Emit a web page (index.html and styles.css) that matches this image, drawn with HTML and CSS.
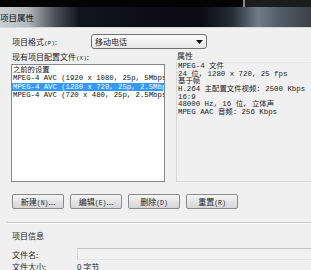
FILE: index.html
```html
<!DOCTYPE html>
<html lang="zh-CN">
<head>
    <meta charset="UTF-8">
    <meta name="viewport" content="width=device-width, initial-scale=1.0">
    <title>项目属性</title>
    <link rel="stylesheet" href="styles.css">
</head>
<body>
<div class="window">
    <!-- Franja superior (otra ventana detrás) -->
    <div class="top-strip">
        <div class="strip-dark"></div>
        <div class="strip-line"></div>
        <div class="strip-gray"></div>
    </div>

    <div class="titlebar">项目属性</div>

    <div class="dialog">
        <!-- Formato del proyecto -->
        <div class="format-row">
            <span class="label format-label">项目格式<small>(P)</small>:</span>
            <div class="select">
                <span>移动电话</span>
                <svg class="select-arrow" width="7" height="4" viewBox="0 0 7 4"><path d="M0 0h7L3.5 4z" fill="#111"/></svg>
            </div>
        </div>

        <div class="panels">
            <div class="presets">
                <div class="label">现有项目配置文件<small>(X)</small>:</div>
                <ul class="listbox">
                    <li>之前的设置</li>
                    <li>MPEG-4 AVC (1920 x 1080, 25p, 5Mbps)</li>
                    <li class="selected">MPEG-4 AVC (1280 x 720, 25p, 2.5Mbps)</li>
                    <li>MPEG-4 AVC (720 x 480, 25p, 2.5Mbps)</li>
                </ul>
            </div>
            <div class="props">
                <div class="label props-label">属性</div>
                <div class="props-box">
                    <p>MPEG-4 文件</p>
                    <p>24 位, 1280 x 720, 25 fps</p>
                    <p>基于帧</p>
                    <p>H.264 主配置文件视频: 2500 Kbps</p>
                    <p>16:9</p>
                    <p>48000 Hz, 16 位, 立体声</p>
                    <p>MPEG AAC 音频: 256 Kbps</p>
                </div>
            </div>
        </div>

        <div class="buttons">
            <button class="btn">新建<small>(N)</small>...</button>
            <button class="btn">编辑<small>(E)</small>...</button>
            <button class="btn">删除<small>(D)</small></button>
            <button class="btn">重置<small>(R)</small></button>
        </div>

        <div class="separator"></div>

        <!-- Información del proyecto -->
        <div class="info">
            <div class="label info-title">项目信息</div>
            <div class="info-grid">
                <span class="label">文件名:</span>
                <div class="field"></div>
                <span class="label">文件大小:</span>
                <span class="label">0 字节</span>
            </div>
        </div>
    </div>
</div>
</body>
</html>
```

FILE: styles.css
```css
body {
    margin: 0;
    background: #f0f0f0;
    font-family: "Noto Sans CJK SC", sans-serif;
    color: #1e1e1e;
}

.window {
    width: 311px;
    height: 270px;
    overflow: hidden;
    background: #f0f0f0;
}

/* Franja superior */
.top-strip {
    display: flex;
    height: 7px;
}

.strip-dark {
    width: 243px;
    background: #040404;
}

.strip-line {
    width: 2px;
    background: #8a8a8a;
}

.strip-gray {
    flex: 1;
    background: #1c1c1c;
}

/* Barra de título */
.titlebar {
    height: 20px;
    line-height: 20px;
    font-size: 8.5px;
    color: #111;
    background: linear-gradient(to right, #cdd0d2 0px, #b4b8bb 28px, #4a5058 55px, #10151c 80px, #080b10 200px, #262c34 232px, #6f7d88 258px, #525e68 278px, #3c4248 311px);
    border-bottom: 1px solid #d8d8d8;
}

.dialog {
    padding-left: 11px;
}

.label {
    font-size: 8px;
    line-height: 11px;
    height: 11px;
    white-space: nowrap;
}

.label small,
.btn small {
    font-family: "Liberation Mono", monospace;
    font-size: 6px;
    line-height: 0;
}

.btn small {
    font-size: 6.5px;
}

/* Fila de formato */
.format-row {
    display: flex;
    align-items: center;
    margin-top: 6px;
    height: 15px;
}

.format-label {
    width: 79px;
    padding-left: 1px;
}

.select {
    display: flex;
    align-items: center;
    justify-content: space-between;
    box-sizing: border-box;
    width: 116px;
    height: 15px;
    padding: 0 3px 0 3px;
    border: 1px solid #707070;
    border-radius: 3px;
    background: linear-gradient(#fcfcfc, #e6e6e6);
    font-size: 8px;
    line-height: 13px;
}

/* Paneles */
.panels {
    display: flex;
    margin-top: 2px;
}

.presets {
    width: 154px;
}

.presets .label {
    padding-left: 1px;
    margin-bottom: 2px;
}

.listbox {
    box-sizing: border-box;
    height: 118px;
    margin: 0;
    padding: 1px 0 0 0;
    list-style: none;
    background: #fff;
    border: 1px solid #828790;
    font-family: "Liberation Mono", "Noto Sans CJK SC", monospace;
    font-size: 7.3px;
    line-height: 8.3px;
    color: #111;
    overflow: hidden;
}

.listbox li {
    height: 8.3px;
    padding-left: 1px;
    white-space: nowrap;
}

.listbox li.selected {
    background: #3399ff;
    color: #fff;
}

.props {
    flex: 1;
    margin-left: 11px;
}

.props-label {
    padding-left: 1px;
    margin-top: -1px;
}

.props-box {
    box-sizing: border-box;
    height: 120px;
    margin-top: 1px;
    margin-right: -4px;
    padding-left: 1px;
    border: 1px solid #d5d9dc;
    border-top-color: #e4e6e8;
    font-family: "Liberation Mono", "Noto Sans CJK SC", monospace;
    font-size: 7.4px;
    line-height: 7.7px;
    color: #222;
}

.props-box p {
    height: 7.7px;
    margin: 0;
    white-space: nowrap;
}

/* Botones */
.buttons {
    display: flex;
    gap: 6px;
    margin-top: 12px;
    padding-left: 1px;
}

.btn {
    box-sizing: border-box;
    width: 52px;
    height: 15px;
    padding: 0;
    border: 1px solid #8a8a8a;
    border-radius: 2px;
    background: linear-gradient(#f6f6f6, #e4e4e4 50%, #d6d6d6);
    font-family: "Noto Sans CJK SC", sans-serif;
    font-size: 8px;
    line-height: 13px;
    color: #1e1e1e;
}

.separator {
    margin: 13px 0 0 -4px;
    height: 1px;
    background: #c6c6c6;
    border-bottom: 1px solid #fbfbfb;
}

/* Información */
.info {
    padding-left: 1px;
}

.info-title {
    margin-top: 6px;
}

.info-grid {
    display: grid;
    grid-template-columns: 65px 1fr;
    row-gap: 1px;
    margin-top: 7px;
    align-items: center;
}

.field {
    height: 10px;
    margin-right: -4px;
    border-top: 1px solid #c2c2c2;
    border-bottom: 1px solid #e2e2e2;
    border-left: 1px solid #d4d4d4;
    background: #f2f2f2;
}
```
